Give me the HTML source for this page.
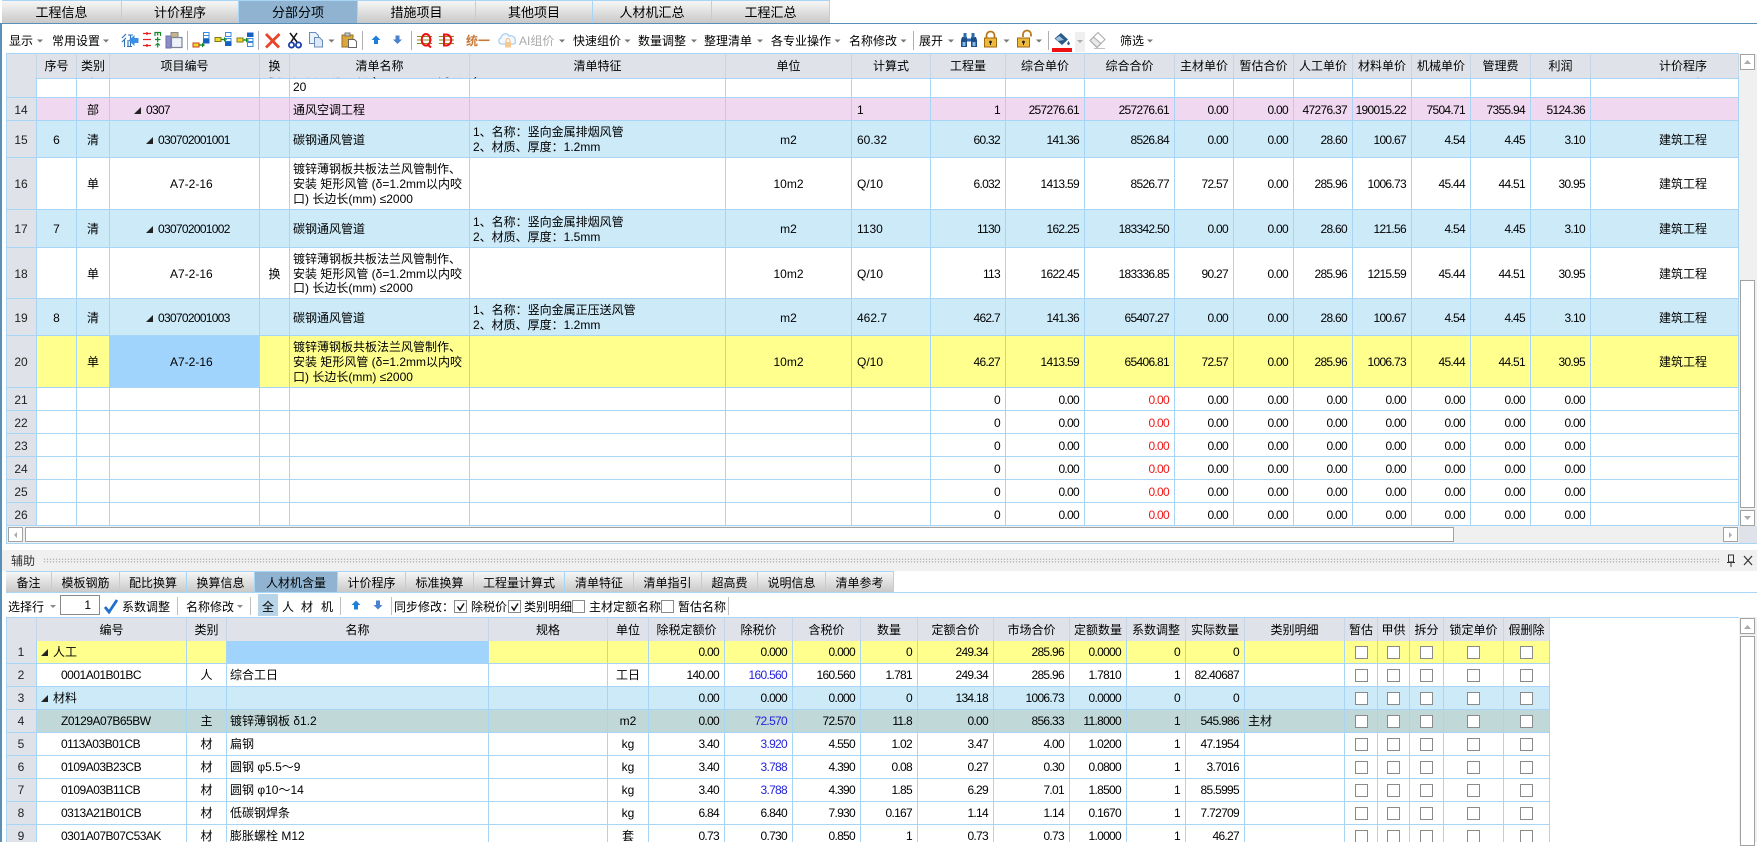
<!DOCTYPE html>
<html lang="zh-CN">
<head>
<meta charset="utf-8">
<title>分部分项</title>
<style>
html,body{margin:0;padding:0;background:#fff}
body{position:relative;width:1757px;height:842px;overflow:hidden;font:12px/16px "Liberation Sans","Noto Sans CJK SC",sans-serif;color:#000}
.a{position:absolute}
.t{position:absolute;white-space:nowrap;line-height:16px}
.tab{position:absolute;box-sizing:border-box;text-align:center;background:linear-gradient(#f6f6f6,#c9c9c9);border-right:1px solid #a8d4f5;border-top:1px solid #a8d4f5}
.tab.on{background:#8fb3d0}
.tt{top:0;height:23px;line-height:24px;font-size:13px}
.bt{top:571px;height:21px;line-height:22px}
table{border-collapse:separate;border-spacing:0;table-layout:fixed;position:absolute}
td{box-sizing:border-box;padding:0;border-right:1px solid #a8d4f5;border-bottom:1px solid #a8d4f5;white-space:nowrap;overflow:hidden;vertical-align:middle;line-height:14.67px;text-align:center}
#T td{padding-top:2px}
.h td{background:#dfe2e8;border-right-color:#c5d6e6;border-bottom-color:#a8d4f5;line-height:24px}
td:first-child{background:#dfe2e8;color:#222}
.p td{background:#f0d8f0}.b td{background:#cdeaf8}.y td{background:#ffff8e}.g td{background:#c0d8d8}
.p td:first-child,.b td:first-child,.y td:first-child,.g td:first-child{background:#dfe2e8}
td.s,.y td.s{background:#a0d4fc}
#T td:nth-child(4){text-align:left;padding-left:60px}
#T td:nth-child(6),#T td:nth-child(7){text-align:left;padding-left:3px}
#T td:nth-child(9){text-align:left;padding-left:5px}
#T td:nth-child(n+10):nth-child(-n+19){text-align:right;padding-right:5px;letter-spacing:-.7px}
#T td:nth-child(20){text-align:left;padding-left:68px}
#T .c{padding-left:36px!important;letter-spacing:-.7px}
#T .c0{padding-left:24px!important;letter-spacing:-.7px}
.tri{display:inline-block;width:0;height:0;border-left:7px solid transparent;border-bottom:7px solid #222;margin-right:5px}
#B td:nth-child(2){text-align:left;padding-left:24px;letter-spacing:-.5px}
#B td.gp{padding-left:4px;letter-spacing:0}
#B td:nth-child(4),#B td:nth-child(16){text-align:left;padding-left:3px}
#B td:nth-child(n+7):nth-child(-n+15){text-align:right;padding-right:5px;letter-spacing:-.7px}
#T td.r,#B td.r{color:#f01818}#B td.u{color:#2222dd}
i{display:inline-block;box-sizing:border-box;width:13px;height:13px;border:1px solid #8a8a8a;background:#fff;vertical-align:middle}
.sb{position:absolute;box-sizing:border-box;background:#fff;border:1px solid #a2a2a2}
</style>
</head>
<body>
<!-- top tabs -->
<div class="tab tt" style="left:2px;width:120px">工程信息</div>
<div class="tab tt" style="left:122px;width:117px">计价程序</div>
<div class="tab tt on" style="left:239px;width:119px">分部分项</div>
<div class="tab tt" style="left:358px;width:118px">措施项目</div>
<div class="tab tt" style="left:476px;width:117px">其他项目</div>
<div class="tab tt" style="left:593px;width:119px">人材机汇总</div>
<div class="tab tt" style="left:712px;width:118px">工程汇总</div>
<div class="a" style="left:0;top:23px;width:1757px;height:1px;background:#5a8fb8"></div>
<div class="a" style="left:0;top:23px;width:2px;height:819px;background:#5a8fb8"></div>

<!-- toolbar text -->
<span class="t" style="left:9px;top:33px">显示</span>
<span class="t" style="left:52px;top:33px">常用设置</span>
<span class="t" style="left:466px;top:33px;color:#c87838;font-weight:bold">统一</span>
<span class="t" style="left:519px;top:33px;color:#aaa">AI组价</span>
<span class="t" style="left:573px;top:33px">快速组价</span>
<span class="t" style="left:638px;top:33px">数量调整</span>
<span class="t" style="left:704px;top:33px">整理清单</span>
<span class="t" style="left:771px;top:33px">各专业操作</span>
<span class="t" style="left:849px;top:33px">名称修改</span>
<span class="t" style="left:919px;top:33px">展开</span>
<span class="t" style="left:1120px;top:33px">筛选</span>
<div class="a" style="left:1075px;top:32px;width:10px;height:20px;background:#efefef"></div>

<!-- toolbar icons -->
<svg class="a" style="left:0;top:0" width="1757" height="53" viewBox="0 0 1757 53" fill="none">
<g fill="#777">
<path d="M37 39.5h6l-3 3zM103 39.5h6l-3 3zM328.500 39.500h6l-3 3zM559 39.500h6l-3 3zM624.500 39.500h6l-3 3zM691 39.500h6l-3 3zM757 39.500h6l-3 3zM834.500 39.500h6l-3 3zM900.500 39.500h6l-3 3zM948 39.500h6l-3 3zM1003.500 39.500h6l-3 3zM1036 39.500h6l-3 3zM1147 39.500h6l-3 3z"/>
<path d="M1077 40h6l-3 3z" fill="#aaa"/>
</g>
<g stroke="#b0b0b0"><path d="M187.500 31v19M258.500 31v19M362.500 31v19M411.500 31v19M913.500 31v19M1048.500 31v19"/></g>
<!-- icon 1 -->
<path d="M126 34l-4 4M126 38l-4 4M124.500 40v7M128 35h5M130.500 35v11M128 40v6M127 46.500h5" stroke="#2b70b8" stroke-width="1.100"/>
<path d="M138.500 38v5h-4v3l-6-5.500 6-5.500v3z" fill="#3c8fe6"/>
<!-- icon 2 -->
<path d="M143 33.500h8M147 35v-3M143 39.500h8M143 45.500h8M147 47v-3" stroke="#e62020" stroke-width="1.300"/>
<path d="M155 36v-3.500h5.500V36M157.700 33v2.500M157.700 37v5M155 39.500h5.500M157.700 43.500v4M155.500 45.500l2.200-2.200 2.200 2.200" stroke="#128a2a" stroke-width="1.200"/>
<!-- icon 3 -->
<path d="M166 36h5v12h-5z" fill="#8c8cc8" stroke="#6a6aa8"/>
<path d="M171 32.500h7v5h-7z" fill="#c8b48a" stroke="#8a8a8a"/>
<path d="M171.500 37.500h10.500v10h-10.500z" fill="#eef2f8" stroke="#7a8498" stroke-width="1.200"/>
<!-- icon 4,5,6 -->
<path d="M193 43h6v4h-6z" fill="#f2d828" stroke="#c8401a"/>
<path d="M199.500 45h3.500" stroke="#128a2a" stroke-width="1.400"/><path d="M202 42.500l3 2.500-3 2.500z" fill="#128a2a"/>
<path d="M203.500 32.500h5.500v3h-5.500zM203.500 35.500h5.500v3h-5.500z" stroke="#3a8ade"/><path d="M203 39h6.500v4.500H203z" fill="#1560c0"/>
<path d="M215 37.500h6v4h-6z" fill="#f2d828" stroke="#7a7a20"/>
<path d="M221.500 39.500h3.500" stroke="#128a2a" stroke-width="1.400"/><path d="M224 37l3 2.500-3 2.500z" fill="#128a2a"/>
<path d="M225.500 32.500h5.500v4h-5.500zM225.500 38.500h5.500v3h-5.500z" stroke="#3a8ade"/><path d="M225 41.500h6.500v4.500H225z" fill="#1560c0"/>
<path d="M237 38h6v4h-6z" fill="#f2d828" stroke="#7a7a20"/>
<path d="M243.500 40h3.500" stroke="#128a2a" stroke-width="1.400"/><path d="M246 37.500l3 2.500-3 2.500z" fill="#128a2a"/>
<path d="M247 32.500h6.500v4.500H247z" fill="#1560c0"/><path d="M247.500 38.500h5.500v3h-5.500zM247.500 42.500h5.500v4h-5.500z" stroke="#3a8ade"/>
<!-- X -->
<path d="M266 34l13 13.500M279.500 34L266 47.500" stroke="#e8452a" stroke-width="2.800"/>
<!-- scissors -->
<path d="M290 33l7 9M297 33l-6 9" stroke="#111" stroke-width="1.500"/>
<circle cx="291.500" cy="45" r="2.600" stroke="#1b3ea8" stroke-width="1.800"/><circle cx="298.500" cy="45" r="2.600" stroke="#1b3ea8" stroke-width="1.800"/>
<!-- copy -->
<path d="M309.500 32.500h6l3 3v8h-9z" fill="#eaf2fb" stroke="#6a8cb8"/>
<path d="M314.500 37.500h5l3 3v6.500h-8z" fill="#dce8f8" stroke="#6a8cb8"/>
<!-- paste -->
<path d="M342 35h11v12h-11z" fill="#dca83c" stroke="#9a7020"/><path d="M345 33h5v3h-5z" fill="#c8c8c8" stroke="#777"/>
<path d="M348.500 39.500h6l2 2v6h-8z" fill="#fff" stroke="#666"/>
<!-- arrows -->
<path d="M376 35.500l4.500 4.500h-2.500v4h-4v-4h-2.500z" fill="#1f7fd8"/>
<path d="M395.500 35.500h4v4h2.500l-4.500 4.500-4.500-4.500h2.500z" fill="#4a82d0"/>
<!-- Q D -->
<path d="M417 36.500h15M417 40h15M417 43.500h15M439 36.500h15M439 40h15M439 43.500h15" stroke="#8a8a20"/>
<ellipse cx="426" cy="39.800" rx="4.300" ry="5.800" stroke="#ee1010" stroke-width="2"/><path d="M427 44l4 3.500" stroke="#ee1010" stroke-width="2"/>
<path d="M444 34.500v11h2c7 0 7-11 0-11z" stroke="#ee1010" stroke-width="2"/>
<!-- cloud -->
<path d="M502 44c-4 0-4-5-1-6 0-4 6-6 8-2 4-1 7 2 6 5 1 2 0 3-2 3z" fill="#f4f9fe" stroke="#a8d0f0" stroke-width="1.300"/>
<path d="M505 42h6v5.500h-6z" fill="#f8c890"/><path d="M506 42v-1.500a2 2 0 0 1 4 0V42" stroke="#f0b880"/>
<!-- binoculars -->
<path d="M962 37h5v10h-6v-7zM971 37h5l1 3v7h-6z" fill="#1f4f8a"/><path d="M963.500 33h3v5h-3zM971.500 33h3v5h-3zM967 38.500h4v3h-4z" fill="#2c6aa8"/>
<path d="M962.500 42h3v4h-3zM972.500 42h3v4h-3z" fill="#8ab8e0"/>
<!-- locks -->
<path d="M986.500 38v-2.500a4 4 0 0 1 8 0V38" stroke="#b87818" stroke-width="1.800"/><path d="M984.500 38h12v9h-12z" fill="#eeb83c" stroke="#a06a10"/><circle cx="990.500" cy="42" r="1.400" fill="#222"/><path d="M990 42h1v3h-1z" fill="#222"/>
<path d="M1023 37v-2.500a4 4 0 0 1 8 0v2" stroke="#b87818" stroke-width="1.800"/><path d="M1017.500 38h12v9h-12z" fill="#eeb83c" stroke="#a06a10"/><circle cx="1023.500" cy="42" r="1.400" fill="#222"/><path d="M1023 42h1v3h-1z" fill="#222"/>
<!-- paint bucket -->
<path d="M1061 33l7 6.500-6 5.500-7.500-6.500z" fill="#2a5a88"/><path d="M1059.500 36l4.500 4-6 1-2.500-2.500z" fill="#9cc0de"/>
<path d="M1068.500 41c1.500 2.300 2 3.200 0 4-2 -.8-1.500-1.700 0-4z" fill="#2a5a88"/>
<path d="M1052 48h20v4h-20z" fill="#ee1111"/>
<!-- eraser -->
<path d="M1098 32.500l7 7-8 8-7-7z" fill="#fff" stroke="#a8a8a8"/><path d="M1090 40.500l3.500-3.500 7.500 6.500-4 4z" fill="#e8e8e8" stroke="#a8a8a8"/><path d="M1094 48.500h11" stroke="#c0c0c0"/>
</svg>

<!-- top grid header -->
<table class="h" style="left:6px;top:53px;width:1733px;border-top:1px solid #a8d4f5">
<colgroup><col style="width:31px"><col style="width:40px"><col style="width:33px"><col style="width:150px"><col style="width:30px"><col style="width:180px"><col style="width:256px"><col style="width:126px"><col style="width:79px"><col style="width:75px"><col style="width:79px"><col style="width:90px"><col style="width:59px"><col style="width:60px"><col style="width:59px"><col style="width:59px"><col style="width:59px"><col style="width:60px"><col style="width:60px"><col style="width:148px"></colgroup>
<tr style="height:23px"><td></td><td>序号</td><td>类别</td><td>项目编号</td><td>换</td><td>清单名称</td><td>清单特征</td><td>单位</td><td>计算式</td><td>工程量</td><td>综合单价</td><td>综合合价</td><td>主材单价</td><td>暂估合价</td><td>人工单价</td><td>材料单价</td><td>机械单价</td><td>管理费</td><td>利润</td><td style="text-align:left;padding-left:68px">计价程序</td></tr>
</table>

<!-- top grid body -->
<div class="a" style="left:6px;top:77px;width:1733px;height:449px;overflow:hidden">
<table id="T" style="left:0;top:0;width:1733px">
<colgroup><col style="width:31px"><col style="width:40px"><col style="width:33px"><col style="width:150px"><col style="width:30px"><col style="width:180px"><col style="width:256px"><col style="width:126px"><col style="width:79px"><col style="width:75px"><col style="width:79px"><col style="width:90px"><col style="width:59px"><col style="width:60px"><col style="width:59px"><col style="width:59px"><col style="width:59px"><col style="width:60px"><col style="width:60px"><col style="width:148px"></colgroup>
<tr style="height:21px"><td></td><td></td><td></td><td></td><td></td><td style="padding:0 0 0 3px">20</td><td></td><td></td><td></td><td></td><td></td><td></td><td></td><td></td><td></td><td></td><td></td><td></td><td></td><td></td></tr>
<tr class="p" style="height:23px"><td>14</td><td></td><td>部</td><td class="c0"><span class="tri"></span>0307</td><td></td><td>通风空调工程</td><td></td><td></td><td>1</td><td>1</td><td>257276.61</td><td>257276.61</td><td>0.00</td><td>0.00</td><td>47276.37</td><td>190015.22</td><td>7504.71</td><td>7355.94</td><td>5124.36</td><td></td></tr>
<tr class="b" style="height:37px"><td>15</td><td>6</td><td>清</td><td class="c"><span class="tri"></span>030702001001</td><td></td><td>碳钢通风管道</td><td>1、名称：竖向金属排烟风管<br>2、材质、厚度：1.2mm</td><td>m2</td><td>60.32</td><td>60.32</td><td>141.36</td><td>8526.84</td><td>0.00</td><td>0.00</td><td>28.60</td><td>100.67</td><td>4.54</td><td>4.45</td><td>3.10</td><td>建筑工程</td></tr>
<tr style="height:52px"><td>16</td><td></td><td>单</td><td>A7-2-16</td><td></td><td>镀锌薄钢板共板法兰风管制作、<br>安装 矩形风管 (δ=1.2mm以内咬<br>口) 长边长(mm) ≤2000</td><td></td><td>10m2</td><td>Q/10</td><td>6.032</td><td>1413.59</td><td>8526.77</td><td>72.57</td><td>0.00</td><td>285.96</td><td>1006.73</td><td>45.44</td><td>44.51</td><td>30.95</td><td>建筑工程</td></tr>
<tr class="b" style="height:38px"><td>17</td><td>7</td><td>清</td><td class="c"><span class="tri"></span>030702001002</td><td></td><td>碳钢通风管道</td><td>1、名称：竖向金属排烟风管<br>2、材质、厚度：1.5mm</td><td>m2</td><td>1130</td><td>1130</td><td>162.25</td><td>183342.50</td><td>0.00</td><td>0.00</td><td>28.60</td><td>121.56</td><td>4.54</td><td>4.45</td><td>3.10</td><td>建筑工程</td></tr>
<tr style="height:51px"><td>18</td><td></td><td>单</td><td>A7-2-16</td><td>换</td><td>镀锌薄钢板共板法兰风管制作、<br>安装 矩形风管 (δ=1.2mm以内咬<br>口) 长边长(mm) ≤2000</td><td></td><td>10m2</td><td>Q/10</td><td>113</td><td>1622.45</td><td>183336.85</td><td>90.27</td><td>0.00</td><td>285.96</td><td>1215.59</td><td>45.44</td><td>44.51</td><td>30.95</td><td>建筑工程</td></tr>
<tr class="b" style="height:37px"><td>19</td><td>8</td><td>清</td><td class="c"><span class="tri"></span>030702001003</td><td></td><td>碳钢通风管道</td><td>1、名称：竖向金属正压送风管<br>2、材质、厚度：1.2mm</td><td>m2</td><td>462.7</td><td>462.7</td><td>141.36</td><td>65407.27</td><td>0.00</td><td>0.00</td><td>28.60</td><td>100.67</td><td>4.54</td><td>4.45</td><td>3.10</td><td>建筑工程</td></tr>
<tr class="y" style="height:52px"><td>20</td><td></td><td>单</td><td class="s">A7-2-16</td><td></td><td>镀锌薄钢板共板法兰风管制作、<br>安装 矩形风管 (δ=1.2mm以内咬<br>口) 长边长(mm) ≤2000</td><td></td><td>10m2</td><td>Q/10</td><td>46.27</td><td>1413.59</td><td>65406.81</td><td>72.57</td><td>0.00</td><td>285.96</td><td>1006.73</td><td>45.44</td><td>44.51</td><td>30.95</td><td>建筑工程</td></tr>
<tr style="height:23px"><td>21</td><td></td><td></td><td></td><td></td><td></td><td></td><td></td><td></td><td>0</td><td>0.00</td><td class="r">0.00</td><td>0.00</td><td>0.00</td><td>0.00</td><td>0.00</td><td>0.00</td><td>0.00</td><td>0.00</td><td></td></tr>
<tr style="height:23px"><td>22</td><td></td><td></td><td></td><td></td><td></td><td></td><td></td><td></td><td>0</td><td>0.00</td><td class="r">0.00</td><td>0.00</td><td>0.00</td><td>0.00</td><td>0.00</td><td>0.00</td><td>0.00</td><td>0.00</td><td></td></tr>
<tr style="height:23px"><td>23</td><td></td><td></td><td></td><td></td><td></td><td></td><td></td><td></td><td>0</td><td>0.00</td><td class="r">0.00</td><td>0.00</td><td>0.00</td><td>0.00</td><td>0.00</td><td>0.00</td><td>0.00</td><td>0.00</td><td></td></tr>
<tr style="height:23px"><td>24</td><td></td><td></td><td></td><td></td><td></td><td></td><td></td><td></td><td>0</td><td>0.00</td><td class="r">0.00</td><td>0.00</td><td>0.00</td><td>0.00</td><td>0.00</td><td>0.00</td><td>0.00</td><td>0.00</td><td></td></tr>
<tr style="height:23px"><td>25</td><td></td><td></td><td></td><td></td><td></td><td></td><td></td><td></td><td>0</td><td>0.00</td><td class="r">0.00</td><td>0.00</td><td>0.00</td><td>0.00</td><td>0.00</td><td>0.00</td><td>0.00</td><td>0.00</td><td></td></tr>
<tr style="height:23px"><td>26</td><td></td><td></td><td></td><td></td><td></td><td></td><td></td><td></td><td>0</td><td>0.00</td><td class="r">0.00</td><td>0.00</td><td>0.00</td><td>0.00</td><td>0.00</td><td>0.00</td><td>0.00</td><td>0.00</td><td></td></tr>
</table>
</div>
<div class="a" style="left:6px;top:53px;width:1px;height:490px;background:#a8d4f5"></div>

<!-- top scrollbars -->
<div class="a" style="left:1739px;top:54px;width:18px;height:472px;background:#f0f0f0"></div>
<div class="sb" style="left:1740px;top:54px;width:15px;height:16px"></div>
<div class="sb" style="left:1740px;top:280px;width:15px;height:228px"></div>
<div class="sb" style="left:1740px;top:510px;width:15px;height:16px"></div>
<div class="a" style="left:1739px;top:526px;width:18px;height:17px;background:#dfe2e8"></div>
<div class="a" style="left:7px;top:526px;width:1732px;height:17px;background:#f0f0f0"></div>
<div class="sb" style="left:8px;top:527px;width:15px;height:15px"></div>
<div class="sb" style="left:25px;top:527px;width:1429px;height:15px"></div>
<div class="sb" style="left:1723px;top:527px;width:15px;height:15px"></div>
<div class="a" style="left:6px;top:543px;width:1751px;height:1px;background:#a8d4f5"></div>

<!-- assist bar -->
<div class="a" style="left:2px;top:550px;width:1755px;height:21px;background:#f0f0f0"></div>
<span class="t" style="left:11px;top:553px;color:#333">辅助</span>
<div class="a" style="left:43px;top:558px;width:1677px;height:5px;background-image:radial-gradient(#b8b8b8 .7px,transparent .8px);background-size:3px 2.500px"></div>

<!-- bottom tabs -->
<div class="tab bt" style="left:6px;width:46px">备注</div>
<div class="tab bt" style="left:52px;width:68px">模板钢筋</div>
<div class="tab bt" style="left:120px;width:67px">配比换算</div>
<div class="tab bt" style="left:187px;width:68px">换算信息</div>
<div class="tab bt on" style="left:255px;width:83px">人材机含量</div>
<div class="tab bt" style="left:338px;width:68px">计价程序</div>
<div class="tab bt" style="left:406px;width:68px">标准换算</div>
<div class="tab bt" style="left:474px;width:91px">工程量计算式</div>
<div class="tab bt" style="left:565px;width:69px">清单特征</div>
<div class="tab bt" style="left:634px;width:68px">清单指引</div>
<div class="tab bt" style="left:702px;width:56px">超高费</div>
<div class="tab bt" style="left:758px;width:68px">说明信息</div>
<div class="tab bt" style="left:826px;width:68px">清单参考</div>
<div class="a" style="left:6px;top:592px;width:1751px;height:1px;background:#a8d4f5"></div>

<!-- bottom toolbar -->
<span class="t" style="left:8px;top:599px">选择行</span>
<div class="a" style="left:60px;top:595px;width:40px;height:20px;box-sizing:border-box;border:1px solid #8a8a8a;background:#fff;text-align:right;padding-right:8px;line-height:18px">1</div>
<span class="t" style="left:122px;top:599px">系数调整</span>
<span class="t" style="left:186px;top:599px">名称修改</span>
<div class="a" style="left:258px;top:594px;width:20px;height:22px;background:#b8d4e8"></div>
<span class="t" style="left:262px;top:599px">全</span>
<span class="t" style="left:282px;top:599px">人</span>
<span class="t" style="left:301px;top:599px">材</span>
<span class="t" style="left:321px;top:599px">机</span>
<span class="t" style="left:394px;top:599px">同步修改：</span>
<i class="a" style="left:454px;top:600px"></i>
<span class="t" style="left:471px;top:599px">除税价</span>
<i class="a" style="left:508px;top:600px"></i>
<span class="t" style="left:524px;top:599px">类别明细</span>
<i class="a" style="left:572px;top:600px"></i>
<span class="t" style="left:589px;top:599px">主材定额名称</span>
<i class="a" style="left:661px;top:600px"></i>
<span class="t" style="left:678px;top:599px">暂估名称</span>
<svg class="a" style="left:0;top:590px" width="800" height="30" viewBox="0 590 800 30" fill="none">
<path d="M50 605h6l-3 3zM237 605h6l-3 3z" fill="#888"/>
<path d="M105 607l4 5 8-12" stroke="#1f6fd0" stroke-width="2.800"/>
<path d="M177.500 597v18M250.500 597v18M340.500 597v18M391.500 597v18M728.500 597v18" stroke="#c0c0c0"/>
<path d="M356 600.500l4.500 4.500h-2.500v4.500h-4v-4.500h-2.500z" fill="#1f7fd8"/>
<path d="M376 600.500h4v4.500h2.500l-4.500 4.500-4.500-4.500h2.500z" fill="#4a82d0"/>
<path d="M457.500 606.500l2.500 3.500 4-6.500M511.500 606.500l2.500 3.500 4-6.500" stroke="#111" stroke-width="1.500"/>
</svg>

<!-- bottom grid -->
<div class="a" style="left:6px;top:617px;width:1733px;height:1px;background:#a8d4f5"></div>
<div class="a" style="left:6px;top:617px;width:1544px;height:225px;overflow:hidden">
<table class="h" style="left:0;top:1px;width:1544px">
<colgroup><col style="width:31px"><col style="width:150px"><col style="width:40px"><col style="width:262px"><col style="width:119px"><col style="width:41px"><col style="width:76px"><col style="width:68px"><col style="width:68px"><col style="width:57px"><col style="width:76px"><col style="width:76px"><col style="width:57px"><col style="width:59px"><col style="width:59px"><col style="width:100px"><col style="width:33px"><col style="width:32px"><col style="width:34px"><col style="width:60px"><col style="width:46px"></colgroup>
<tr style="height:23px"><td></td><td>编号</td><td>类别</td><td>名称</td><td>规格</td><td>单位</td><td>除税定额价</td><td>除税价</td><td>含税价</td><td>数量</td><td>定额合价</td><td>市场合价</td><td>定额数量</td><td>系数调整</td><td>实际数量</td><td>类别明细</td><td>暂估</td><td>甲供</td><td>拆分</td><td>锁定单价</td><td>假删除</td></tr>
</table>
<table id="B" style="left:0;top:24px;width:1544px">
<colgroup><col style="width:31px"><col style="width:150px"><col style="width:40px"><col style="width:262px"><col style="width:119px"><col style="width:41px"><col style="width:76px"><col style="width:68px"><col style="width:68px"><col style="width:57px"><col style="width:76px"><col style="width:76px"><col style="width:57px"><col style="width:59px"><col style="width:59px"><col style="width:100px"><col style="width:33px"><col style="width:32px"><col style="width:34px"><col style="width:60px"><col style="width:46px"></colgroup>
<tr class="y" style="height:23px"><td>1</td><td class="gp"><span class="tri"></span>人工</td><td></td><td class="s"></td><td></td><td></td><td>0.00</td><td>0.000</td><td>0.000</td><td>0</td><td>249.34</td><td>285.96</td><td>0.0000</td><td>0</td><td>0</td><td></td><td><i></i></td><td><i></i></td><td><i></i></td><td><i></i></td><td><i></i></td></tr>
<tr style="height:23px"><td>2</td><td>0001A01B01BC</td><td>人</td><td>综合工日</td><td></td><td>工日</td><td>140.00</td><td class="u">160.560</td><td>160.560</td><td>1.781</td><td>249.34</td><td>285.96</td><td>1.7810</td><td>1</td><td>82.40687</td><td></td><td><i></i></td><td><i></i></td><td><i></i></td><td><i></i></td><td><i></i></td></tr>
<tr class="b" style="height:23px"><td>3</td><td class="gp"><span class="tri"></span>材料</td><td></td><td></td><td></td><td></td><td>0.00</td><td>0.000</td><td>0.000</td><td>0</td><td>134.18</td><td>1006.73</td><td>0.0000</td><td>0</td><td>0</td><td></td><td><i></i></td><td><i></i></td><td><i></i></td><td><i></i></td><td><i></i></td></tr>
<tr class="g" style="height:23px"><td>4</td><td>Z0129A07B65BW</td><td>主</td><td>镀锌薄钢板 δ1.2</td><td></td><td>m2</td><td>0.00</td><td class="u">72.570</td><td>72.570</td><td>11.8</td><td>0.00</td><td>856.33</td><td>11.8000</td><td>1</td><td>545.986</td><td>主材</td><td><i></i></td><td><i></i></td><td><i></i></td><td><i></i></td><td><i></i></td></tr>
<tr style="height:23px"><td>5</td><td>0113A03B01CB</td><td>材</td><td>扁钢</td><td></td><td>kg</td><td>3.40</td><td class="u">3.920</td><td>4.550</td><td>1.02</td><td>3.47</td><td>4.00</td><td>1.0200</td><td>1</td><td>47.1954</td><td></td><td><i></i></td><td><i></i></td><td><i></i></td><td><i></i></td><td><i></i></td></tr>
<tr style="height:23px"><td>6</td><td>0109A03B23CB</td><td>材</td><td>圆钢 φ5.5～9</td><td></td><td>kg</td><td>3.40</td><td class="u">3.788</td><td>4.390</td><td>0.08</td><td>0.27</td><td>0.30</td><td>0.0800</td><td>1</td><td>3.7016</td><td></td><td><i></i></td><td><i></i></td><td><i></i></td><td><i></i></td><td><i></i></td></tr>
<tr style="height:23px"><td>7</td><td>0109A03B11CB</td><td>材</td><td>圆钢 φ10～14</td><td></td><td>kg</td><td>3.40</td><td class="u">3.788</td><td>4.390</td><td>1.85</td><td>6.29</td><td>7.01</td><td>1.8500</td><td>1</td><td>85.5995</td><td></td><td><i></i></td><td><i></i></td><td><i></i></td><td><i></i></td><td><i></i></td></tr>
<tr style="height:23px"><td>8</td><td>0313A21B01CB</td><td>材</td><td>低碳钢焊条</td><td></td><td>kg</td><td>6.84</td><td>6.840</td><td>7.930</td><td>0.167</td><td>1.14</td><td>1.14</td><td>0.1670</td><td>1</td><td>7.72709</td><td></td><td><i></i></td><td><i></i></td><td><i></i></td><td><i></i></td><td><i></i></td></tr>
<tr style="height:23px"><td>9</td><td>0301A07B07C53AK</td><td>材</td><td>膨胀螺栓 M12</td><td></td><td>套</td><td>0.73</td><td>0.730</td><td>0.850</td><td>1</td><td>0.73</td><td>0.73</td><td>1.0000</td><td>1</td><td>46.27</td><td></td><td><i></i></td><td><i></i></td><td><i></i></td><td><i></i></td><td><i></i></td></tr>
</table>
</div>
<div class="a" style="left:6px;top:617px;width:1px;height:225px;background:#a8d4f5"></div>

<!-- bottom scrollbar -->
<div class="a" style="left:1739px;top:617px;width:18px;height:225px;background:#f0f0f0"></div>
<div class="sb" style="left:1740px;top:618px;width:15px;height:16px"></div>
<div class="sb" style="left:1740px;top:636px;width:15px;height:210px"></div>

<!-- overlay arrows and pin/close -->
<svg class="a" style="left:0;top:0" width="1757" height="842" viewBox="0 0 1757 842" fill="none">
<path d="M1744 64l3.500-4 3.500 4zM1744 516l3.500 4 3.500-4zM1744 629l3.500-4 3.500 4z" fill="#aaa"/>
<path d="M17 532l-3 3 3 3zM1729 532l3 3-3 3z" fill="#aaa"/>
<path d="M1728.500 555h5v7h-5zM1727 562.500h8M1731 563v4" stroke="#333"/>
<path d="M1744 556l8 9M1752 556l-8 9" stroke="#333" stroke-width="1.200"/>
</svg>
<!-- clipped slivers from row 13 -->
<div class="a" style="left:0;top:77px;width:1739px;height:2px;overflow:hidden">
<span class="t" style="left:86px;top:-13px">单</span>
<span class="t" style="left:269px;top:-13px">换</span>
<span class="t" style="left:293px;top:-13px">安装 矩形风管 (δ=1.2mm以内咬口)</span>
<span class="t" style="left:1659px;top:-13px">建筑工程</span>
</div>
</body>
</html>
